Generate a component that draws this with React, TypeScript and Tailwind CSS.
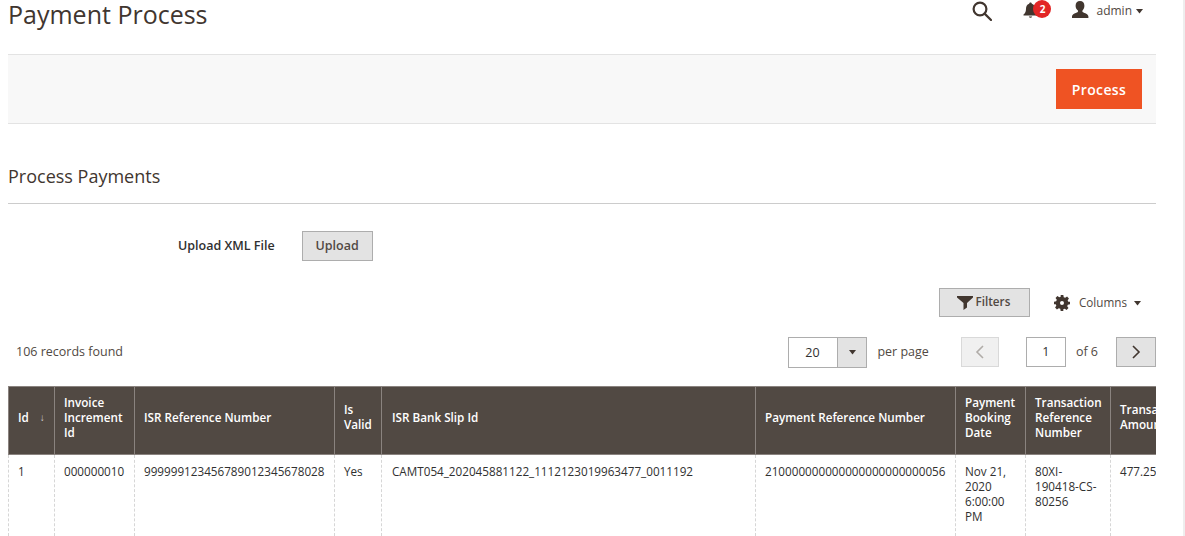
import React from "react";

const font = { fontFamily: '"Open Sans", sans-serif' };

const allCols = [
  { w: "w-[46px] pl-[9px]", h: "Id", c: "1" },
  { w: "w-[80px] pl-[9px]", h: "Invoice Increment Id", c: "000000010" },
  { w: "w-[200px] pl-[9px]", h: "ISR Reference Number", c: "999999123456789012345678028" },
  { w: "w-[47px] pl-[9px]", h: "Is Valid", c: "Yes" },
  { w: "w-[374px] pl-[10px]", h: "ISR Bank Slip Id", c: "CAMT054_202045881122_1112123019963477_0011192" },
  { w: "w-[200px] pl-[9px]", h: "Payment Reference Number", c: "210000000000000000000000056" },
  { w: "w-[70px] pl-[9px]", h: "Payment Booking Date", c: "Nov 21, 2020 6:00:00 PM" },
  { w: "w-[85px] pl-[9px]", h: "Transaction Reference Number", c: "80XI-190418-CS-80256" },
  { w: "w-[120px] pl-[9px]", h: "Transaction Amount", c: "477.25" },
];

function Btn({ children, className = "" }: { children: React.ReactNode; className?: string }) {
  return (
    <div className={"flex items-center justify-center border border-[#adadad] bg-[#e3e3e3] text-[#514943] " + className}>
      {children}
    </div>
  );
}

function Caret({ className = "" }: { className?: string }) {
  return (
    <svg width="7" height="5" viewBox="0 0 7 5" fill="#41362f" className={"shrink-0 " + className}>
      <path d="M0 0h7L3.500 4.500z" />
    </svg>
  );
}

export default function App() {
  return (
    <div className="relative h-[536px] w-[1185px] overflow-hidden bg-white text-[#41362f]" style={font}>
      <div className="ml-2 w-[1148px]">
        {/* header */}
        <div className="flex h-[54px] items-start justify-between">
          <h1 className="mt-[-7px] text-[25px] leading-[42px] font-normal text-[#41362f]">Payment Process</h1>
          <div className="mr-[13px] flex items-start">
            <svg width="20" height="20" viewBox="0 0 20 20" className="mt-[1px] mr-[30px]" fill="none" stroke="#41362f" strokeWidth="2.2">
              <circle cx="8" cy="8" r="6.4" />
              <path d="M12.6 12.6 19 19" strokeLinecap="round" />
            </svg>
            <div className="relative mt-[2px] mr-[20px] ml-[1px] h-[18px] w-[28px]">
              <svg width="15" height="17" viewBox="0 0 15 17" className="absolute top-0 left-0" fill="#41362f">
                <path d="M7.5 0.5c-.9 0-1.3.6-1.3 1.3C3.8 2.5 3 4.5 3 7c0 3-1.2 4.6-2.5 5.6v1h14v-1C13.200 11.600 12 10 12 7c0-2.500-.8-4.500-3.200-5.200 0-.7-.4-1.300-1.300-1.300zM5.800 14.500a1.800 1.800 0 0 0 3.400 0z" />
              </svg>
              <div className="absolute top-[-2px] left-[10px] flex h-[18px] w-[18px] items-center justify-center rounded-full bg-[#e22626] text-[10px] font-bold text-white">2</div>
            </div>
            <svg width="18" height="18" viewBox="0 0 18 18" className="mt-[1px] mr-[7px]" fill="#41362f">
              <path d="M9 0c2.800 0 4.400 2 4.400 4.700 0 2-.8 3.700-1.900 4.800-.3.500-.2 1.300.4 1.700 1.700.9 5.500 1.700 5.500 4.300V17H1v-1.500c0-2.600 3.800-3.400 5.500-4.300.6-.4.700-1.200.4-1.700C5.400 8.400 4.600 6.700 4.600 4.700 4.600 2 6.200 0 9 0z" />
            </svg>
            <span className="mt-[1px] text-[12px] leading-[20px] text-[#514943]">admin</span>
            <Caret className="mt-[9px] ml-[4px]" />
          </div>
        </div>

        {/* action bar */}
        <div className="flex h-[70px] items-center justify-end border-y border-[#e3e3e3] bg-[#f8f8f8] pr-[14px]">
          <div className="flex h-[40px] w-[86px] items-center justify-center bg-[#ef5323] text-[14px] font-semibold tracking-[0.35px] text-white">Process</div>
        </div>

        {/* section */}
        <div className="mt-[40px] flex h-[40px] items-start border-b border-[#cccccc]">
          <h2 className="text-[18px] leading-[25px] text-[#41362f]">Process Payments</h2>
        </div>

        <div className="mt-[27px] flex h-[30px] items-center">
          <span className="ml-[170px] text-[12.5px] font-semibold text-[#303030]">Upload XML File</span>
          <Btn className="ml-[27px] h-[30px] w-[71px] text-[12.5px] font-semibold">Upload</Btn>
        </div>

        {/* filters */}
        <div className="mt-[27px] flex h-[29px] items-center justify-end">
          <Btn className="h-[29px] w-[91px] gap-[3px] pr-[2px] pb-[2px] text-[11.7px] font-semibold">
            <svg width="16" height="14" viewBox="0 0 16 14" fill="#41362f" className="mt-[2px]"><path d="M0 0h16v1.500L10 7v4.500L6.500 14V7L0 1.500z" /></svg>
            Filters
          </Btn>
          <svg width="16" height="16" viewBox="0 0 24 24" className="ml-[24px]" fill="#41362f">
            <path fillRule="evenodd" d="M10 0h4l.6 3.300 2.200.9L19.600 2.300l2.800 2.800-1.900 2.800.9 2.200L24 10v4l-3.300.6-.9 2.200 1.900 2.800-2.800 2.800-2.800-1.900-2.200.9L14 24h-4l-.6-3.300-2.200-.9-2.800 1.900-2.800-2.800 1.900-2.800-.9-2.200L0 14v-4l3.300-.6.9-2.200L2.300 4.400l2.800-2.800 2.800 1.900 2.200-.9zM12 9a3 3 0 1 0 0 6 3 3 0 0 0 0-6z" />
          </svg>
          <span className="ml-[9px] text-[11.7px] text-[#514943]">Columns</span>
          <Caret className="mt-[2px] mr-[15px] ml-[7px]" />
        </div>

        {/* pager */}
        <div className="mt-[20px] flex h-[31px] items-center text-[12.5px] text-[#514943]">
          <span className="mt-[-1px] ml-[8px]">106 records found</span>
          <div className="ml-auto flex h-[31px] w-[79px] border border-[#adadad] bg-white">
            <span className="flex-1 pr-[2px] text-center leading-[29px] text-[#303030]">20</span>
            <span className="flex w-[29px] items-center justify-center border-l border-[#adadad] bg-[#e3e3e3]">
              <Caret />
            </span>
          </div>
          <span className="ml-[10px]">per page</span>
          <div className="mt-[-1px] ml-[32px] flex h-[30px] w-[38px] items-center justify-center border border-[#d9d9d9] bg-[#f0f0f0]">
            <svg width="10" height="14" viewBox="0 0 10 14" fill="none" stroke="#b0aca8" strokeWidth="1.600"><path d="M8 1 2 7l6 6" /></svg>
          </div>
          <div className="mt-[-1px] ml-[27px] flex h-[30px] w-[40px] items-center justify-center border border-[#adadad] text-[#303030]">1</div>
          <span className="mt-[-1px] ml-[10px]">of 6</span>
          <Btn className="mt-[-1px] ml-[18px] h-[30px] w-[40px]">
            <svg width="10" height="14" viewBox="0 0 10 14" fill="none" stroke="#41362f" strokeWidth="1.600"><path d="m2 1 6 6-6 6" /></svg>
          </Btn>
        </div>

        {/* table */}
        <div className="mt-[18px] overflow-hidden">
          <div className="flex h-[69px] w-[1222px] border-y border-[#8a837f] bg-[#514943] text-[11.7px] leading-[15px] font-semibold text-white">
            {allCols.map((c, i) => (
              <div key={i} className={"flex shrink-0 items-center border-l border-[#8a837f] pr-[6px] pb-[7px] " + c.w}>
                <span>{c.h}</span>
                {i === 0 && <span className="ml-[11px] text-[10px] font-bold text-[#d5d2d0]">↓</span>}
              </div>
            ))}
          </div>
          <div className="flex h-[81px] w-[1222px] text-[11.7px] leading-[15px] text-[#303030]">
            {allCols.map((c, i) => (
              <div key={i} className={"shrink-0 border-l border-dashed border-[#d6d6d6] pt-[9px] pr-[6px] " + c.w}>{c.c}</div>
            ))}
          </div>
        </div>
      </div>
      <div className="absolute top-0 right-0 h-full w-[2px] bg-[#eeeeee]" />
    </div>
  );
}
